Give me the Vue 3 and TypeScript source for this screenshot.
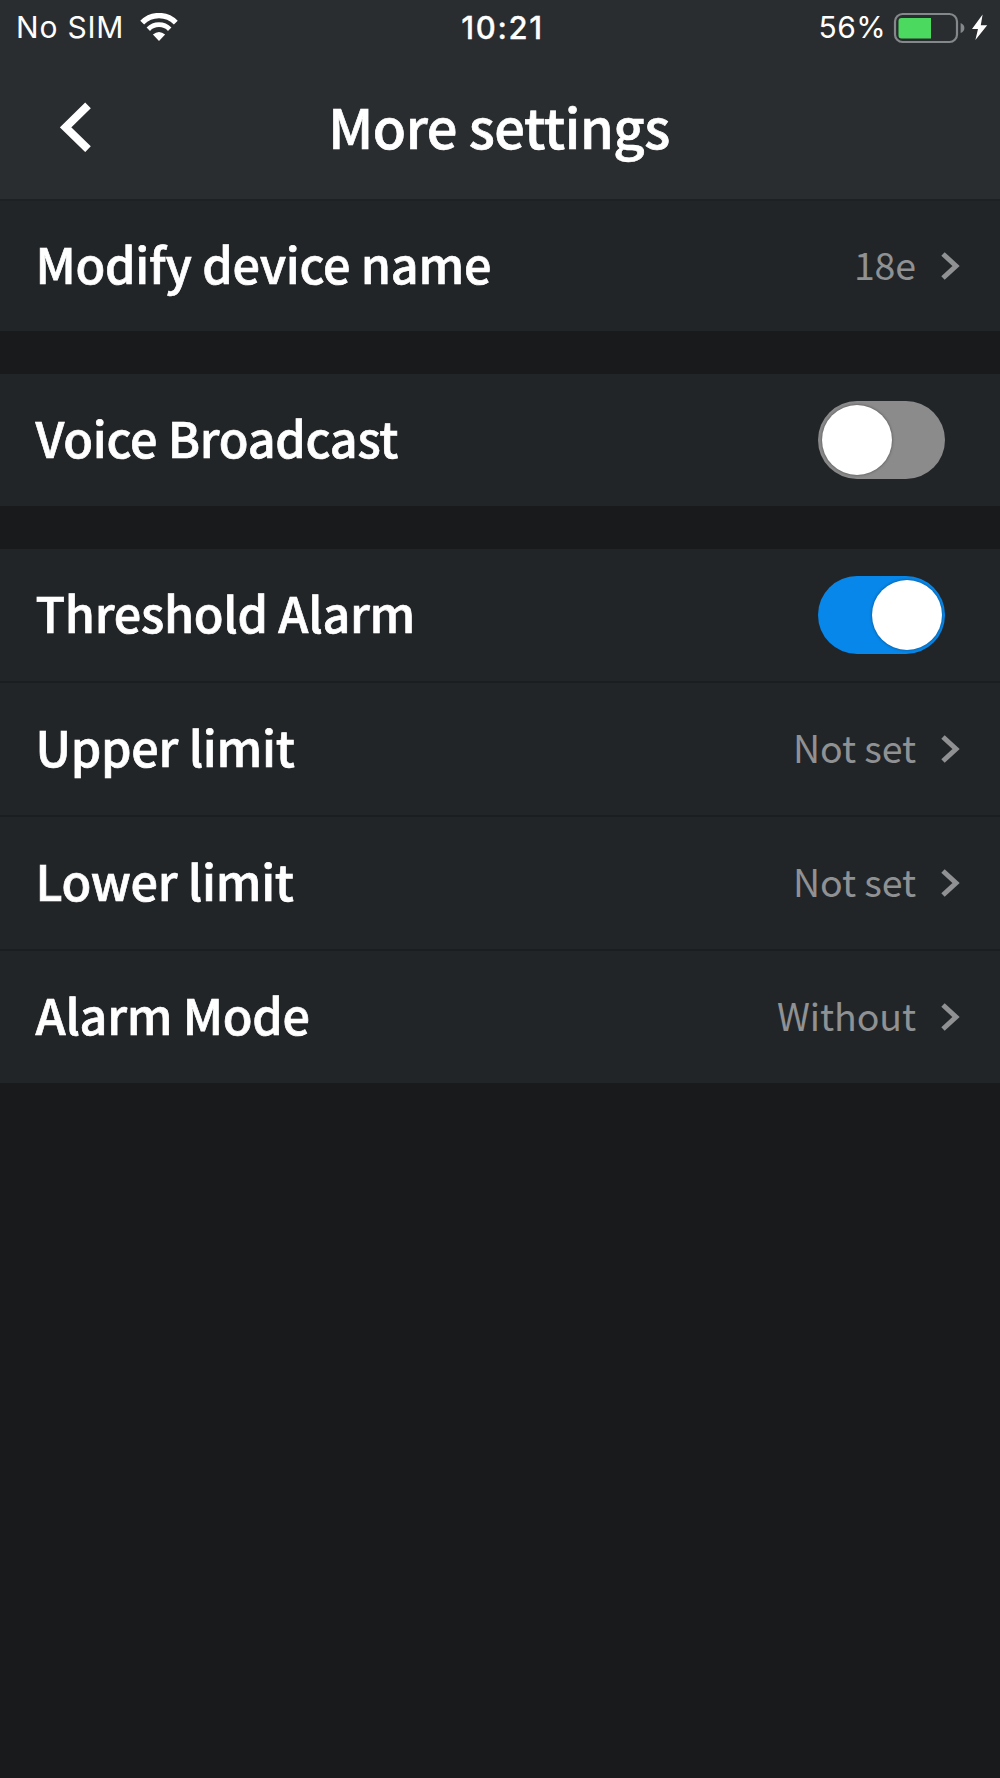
<script setup lang="ts">
import { ref } from 'vue'

interface Row {
  label: string
  kind: 'link' | 'switch'
  value?: string
  on?: boolean
}

const groups = ref<Row[][]>([
  [{ label: 'Modify device name', kind: 'link', value: '18e' }],
  [{ label: 'Voice Broadcast', kind: 'switch', on: false }],
  [
    { label: 'Threshold Alarm', kind: 'switch', on: true },
    { label: 'Upper limit', kind: 'link', value: 'Not set' },
    { label: 'Lower limit', kind: 'link', value: 'Not set' },
    { label: 'Alarm Mode', kind: 'link', value: 'Without' },
  ],
])
</script>

<template>
  <div class="screen">
    <header class="header">
      <div class="status">
        <div class="status-left">
          <span class="carrier">No SIM</span>
          <svg class="wifi" width="38" height="29" viewBox="0 0 38 29">
            <path d="M2.2 9.6A23.6 23.6 0 0 1 35.8 9.6" fill="none" stroke="#fff" stroke-width="5.4" />
            <path d="M8.3 16.2A15 15 0 0 1 29.7 16.2" fill="none" stroke="#fff" stroke-width="4.8" />
            <path d="M12.9 21.4Q19 16.4 25.1 21.4L19 28Z" fill="#fff" />
          </svg>
        </div>
        <span class="clock">10:21</span>
        <div class="status-right">
          <span class="percent">56%</span>
          <svg class="battery" width="96" height="32" viewBox="0 0 96 32">
            <rect x="2" y="2" width="62" height="28" rx="7.5" fill="none" stroke="#85888a" stroke-width="2.2" />
            <path d="M8.5 6H38V26.5H8.5A3 3 0 0 1 5.5 23.5V9A3 3 0 0 1 8.5 6Z" fill="#4cd95f" />
            <path d="M67.6 11Q71.4 12.5 71.4 16T67.6 21Z" fill="#85888a" />
            <path d="M89.6 2.4L79 17H85L82.4 28L94.2 13.2H87.8Z" fill="#fff" />
          </svg>
        </div>
      </div>
      <div class="nav">
        <button class="back" aria-label="Back">
          <svg width="32" height="50" viewBox="0 0 32 50">
            <path d="M28 3.3L5.6 25.4L28 47.2" fill="none" stroke="#fff" stroke-width="8" />
          </svg>
        </button>
        <h1 class="title">More settings</h1>
      </div>
    </header>

    <main class="groups">
      <section v-for="(rows, g) in groups" :key="g" class="group">
        <div v-for="row in rows" :key="row.label" class="row">
          <span class="label">{{ row.label }}</span>
          <template v-if="row.kind === 'link'">
            <span class="value">{{ row.value }}</span>
            <svg class="chevron" width="20" height="30" viewBox="0 0 20 30">
              <path d="M3 3L16 15L3 27" fill="none" stroke="#8f9193" stroke-width="5" />
            </svg>
          </template>
          <button v-else class="switch" :class="{ on: row.on }" role="switch" :aria-checked="row.on" @click="row.on = !row.on">
            <span class="knob"></span>
          </button>
        </div>
      </section>
    </main>
  </div>
</template>

<style>
body {
  margin: 0;
  background: #191a1c;
}
</style>

<style scoped>
.screen {
  width: 1000px;
  height: 1778px;
  overflow: hidden;
  background: #191a1c;
  color: #fff;
  font-family: 'Noto Sans CJK SC', 'Noto Sans', sans-serif;
}

.header {
  height: 201px;
  box-sizing: border-box;
  background: #2a2d30;
  border-bottom: 2px solid #1e2124;
}

.status {
  display: grid;
  grid-template-columns: 1fr auto 1fr;
  align-items: center;
  height: 55px;
  padding: 0 11px 0 16px;
  font: 400 30px/55px Inter, 'Liberation Sans', sans-serif;
}

.status-left,
.status-right {
  display: flex;
  align-items: center;
}

.status-right {
  justify-content: flex-end;
}

.carrier {
  letter-spacing: 0.8px;
}

.wifi {
  margin-left: 16px;
}

.clock {
  font-size: 31px;
  font-weight: 500;
  letter-spacing: 1.7px;
  -webkit-text-stroke: 0.3px #fff;
}

.percent {
  margin-right: 7px;
  letter-spacing: 0.4px;
}

.battery {
  display: block;
}

.nav {
  display: grid;
  grid-template-columns: 150px 1fr 152px;
  align-items: center;
  height: 144px;
}

.back {
  width: 32px;
  height: 50px;
  margin: 0 0 1px 60px;
  padding: 0;
  border: 0;
  background: none;
}

.back svg {
  display: block;
}

.title {
  margin: 0;
  padding-bottom: 3px;
  text-align: center;
  font-size: 54.2px;
  font-weight: 500;
  letter-spacing: -0.45px;
  line-height: 80px;
  -webkit-text-stroke: 0.7px #fff;
}

.groups {
  display: flex;
  flex-direction: column;
  gap: 43px;
}

.group {
  background: #222528;
}

.row {
  display: flex;
  align-items: center;
  box-sizing: border-box;
  height: 132px;
  padding: 0 40px 0 35.5px;
}

.group:first-child .row {
  height: 130px;
}

.row + .row {
  height: 134px;
  border-top: 2px solid #1b1e20;
}

.label {
  flex: 1;
  padding-bottom: 7px;
  font-size: 48.5px;
  font-weight: 500;
  letter-spacing: -0.28px;
  line-height: 72px;
  -webkit-text-stroke: 0.7px #fff;
}

.value {
  padding-bottom: 4px;
  color: #8f9193;
  font-size: 37.5px;
  font-weight: 400;
  letter-spacing: -0.1px;
  line-height: 56px;
}

.chevron {
  margin: 0 0 1px 24px;
}

.switch {
  display: flex;
  align-items: center;
  box-sizing: border-box;
  width: 127px;
  height: 78px;
  margin-right: 15px;
  padding: 0 3.5px;
  border: 0;
  border-radius: 39px;
  background: #8b8b8c;
}

.switch.on {
  justify-content: flex-end;
  background: #0787ea;
}

.knob {
  width: 70px;
  height: 70px;
  border-radius: 50%;
  background: #fff;
  box-shadow: 0 0 3px rgba(0, 0, 0, 0.45);
}
</style>
